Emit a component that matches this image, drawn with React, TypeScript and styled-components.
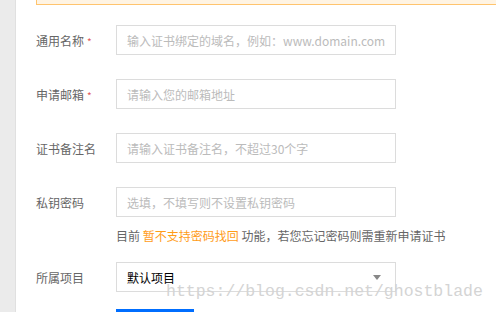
import {createGlobalStyle, styled} from 'styled-components';

const GlobalStyle = createGlobalStyle`
    html, body {
        margin: 0;
        padding: 0;
        background: #fff;
        overflow: hidden;
    }
    body {
        font-family: "Noto Sans CJK SC", "Noto Sans", sans-serif;
        font-size: 12px;
    }
`;

const Page = styled.div`
    position: relative;
    display: flex;
    align-items: flex-start;
    width: 496px;
    height: 312px;
    overflow: hidden;
`;

const SideStrip = styled.div`
    width: 15px;
    height: 312px;
    flex-shrink: 0;
    background: #ebebeb;
    border-right: 1px solid #e0e0e0;
`;

const Main = styled.div`
    flex: 1;
    padding-left: 20px;
    display: flex;
    flex-direction: column;
`;

const Notice = styled.div`
    flex-shrink: 0;
    height: 4px;
    background: #fff4e3;
    border-left: 1px solid #ffc46e;
    border-bottom: 1px solid #ffc46e;
`;

const Form = styled.div`
    display: flex;
    flex-direction: column;
    padding-top: 20px;
`;

const Row = styled.div<{$mt?: number}>`
    display: flex;
    align-items: flex-start;
    margin-top: ${(p) => p.$mt ?? 0}px;
`;

const Label = styled.div`
    width: 80px;
    height: 30px;
    display: flex;
    align-items: center;
    color: #666;
    font-size: 12px;
    flex-shrink: 0;
`;

const Star = styled.span`
    color: #e25c5c;
    font-size: 10px;
    margin-left: 3px;
    position: relative;
    top: 1px;
`;

const Field = styled.div`
    display: flex;
    flex-direction: column;
`;

const Input = styled.input`
    box-sizing: border-box;
    width: 280px;
    height: 30px;
    border: 1px solid #dcdcdc;
    padding: 0 10px;
    font-family: "Noto Sans CJK SC", "Noto Sans", sans-serif;
    font-size: 12px;
    color: #333;
    outline: none;
    &::placeholder {
        color: #bbb;
    }
`;

const Hint = styled.div`
    margin-top: 10px;
    line-height: 17px;
    color: #666;
    white-space: nowrap;
`;

const Warn = styled.span`
    color: #ff9c19;
`;

const Select = styled.div`
    box-sizing: border-box;
    width: 280px;
    height: 30px;
    border: 1px solid #dcdcdc;
    padding: 0 10px;
    display: flex;
    align-items: center;
    justify-content: space-between;
    color: #000;
`;

const Caret = styled.span`
    width: 0;
    height: 0;
    border-left: 4px solid transparent;
    border-right: 4px solid transparent;
    border-top: 5px solid #888;
    margin-right: 4px;
`;

const Submit = styled.button`
    flex-shrink: 0;
    margin-top: 17px;
    margin-left: 80px;
    width: 78px;
    height: 30px;
    border: none;
    background: #006eff;
`;

const Watermark = styled.div`
    position: absolute;
    left: 166px;
    top: 282px;
    font-family: "Liberation Mono", monospace;
    font-size: 16.5px;
    color: #d4d4d4;
    pointer-events: none;
    white-space: nowrap;
`;

const fields = [
    {label: '通用名称', required: true, placeholder: '输入证书绑定的域名，例如：www.domain.com'},
    {label: '申请邮箱', required: true, placeholder: '请输入您的邮箱地址'},
    {label: '证书备注名', required: false, placeholder: '请输入证书备注名，不超过30个字'},
];

const App = () => {
    return (
        <>
            <GlobalStyle />
            <Page>
                <SideStrip />
                <Main>
                    <Notice />
                    <Form>
                        {fields.map((item, i) => (
                            <Row key={item.label} $mt={i === 0 ? 0 : 24}>
                                <Label>
                                    {item.label}
                                    {item.required && <Star>*</Star>}
                                </Label>
                                <Input placeholder={item.placeholder} />
                            </Row>
                        ))}
                        <Row $mt={24}>
                            <Label>私钥密码</Label>
                            <Field>
                                <Input placeholder="选填，不填写则不设置私钥密码" />
                                <Hint>
                                    目前 <Warn>暂不支持密码找回</Warn> 功能，若您忘记密码则需重新申请证书
                                </Hint>
                            </Field>
                        </Row>
                        <Row $mt={18}>
                            <Label>所属项目</Label>
                            <Select>
                                <span>默认项目</span>
                                <Caret />
                            </Select>
                        </Row>
                        <Submit aria-label="确定" />
                    </Form>
                </Main>
                <Watermark>https://blog.csdn.net/ghostblade</Watermark>
            </Page>
        </>
    );
};

export default App;
